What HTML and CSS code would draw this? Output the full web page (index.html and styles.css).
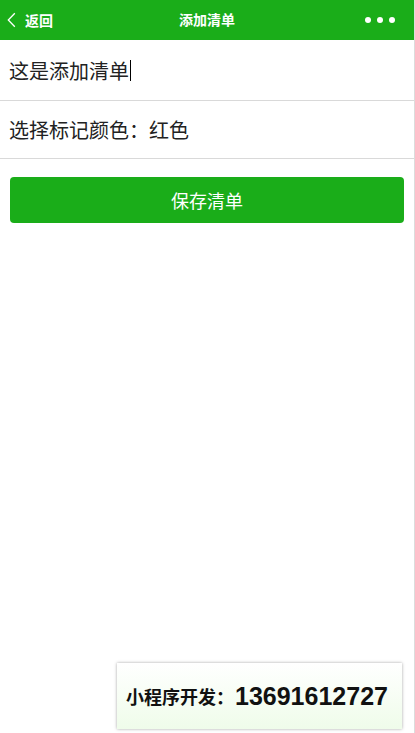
FILE: index.html
```html
<!DOCTYPE html>
<html lang="zh">
<head>
<meta charset="utf-8">
<link rel="stylesheet" href="styles.css">
</head>
<body>
<div class="page">
  <header class="navbar">
    <div class="nav-left">
      <svg class="back-icon" width="9" height="16" viewBox="0 0 9 16"><path d="M7.8 1.2 L1.3 8 L7.8 14.8" fill="none" stroke="#fff" stroke-width="1.3"/></svg>
      <span class="back-text">返回</span>
    </div>
    <div class="nav-title">添加清单</div>
    <div class="nav-more"><i></i><i></i><i></i></div>
  </header>
  <div class="row input-row"><span class="input-text">这是添加清单</span><span class="caret"></span></div>
  <div class="row picker-row">选择标记颜色：红色</div>
  <div class="btn-wrap"><button class="save-btn">保存清单</button></div>
  <div class="spacer"></div>
  <div class="promo"><span class="promo-cn">小程序开发：</span><span class="promo-num">13691612727</span></div>
</div>
</body>
</html>
```
FILE: styles.css
```css
html, body { margin: 0; padding: 0; background: #fff; }
body { font-family: "Liberation Sans", "Noto Sans CJK SC", sans-serif; }
.page {
  width: 414px;
  height: 733px;
  border-right: 1px solid #dcdcdc;
  display: flex;
  flex-direction: column;
  box-sizing: content-box;
  overflow: hidden;
}
.navbar {
  height: 40px;
  background: #1aad19;
  display: flex;
  align-items: center;
  position: relative;
  color: #fff;
  flex-shrink: 0;
}
.nav-left { display: flex; align-items: center; padding-left: 7px; }
.back-icon { display: block; }
.back-text { font-size: 14px; font-weight: bold; margin-left: 9px; }
.nav-title {
  position: absolute; left: 0; right: 0; top: 0; height: 40px; line-height: 40px;
  text-align: center; font-size: 14px; font-weight: bold; pointer-events: none;
}
.nav-more { margin-left: auto; margin-right: 19px; display: flex; gap: 6px; }
.nav-more i { width: 6px; height: 6px; border-radius: 50%; background: #fff; display: block; }
.row {
  border-bottom: 1px solid #d9d9d9;
  padding-left: 9px;
  font-size: 20px;
  color: #222;
  display: flex;
  align-items: center;
}
.input-row { height: 60px; }
.picker-row { height: 57px; }
.caret { width: 1px; height: 21px; background: #000; margin-left: 1px; }
.btn-wrap { padding: 18px 10px 0 10px; }
.save-btn {
  width: 100%; height: 46px; border: none; border-radius: 4px;
  background: #1aad19; color: #fff; font-size: 18px;
  font-family: "Liberation Sans", "Noto Sans CJK SC", sans-serif;
  display: block;
}
.spacer { flex: 1; }
.promo {
  align-self: flex-end;
  margin-right: 12px; margin-bottom: 4px;
  width: 285px; height: 66px;
  box-sizing: border-box;
  background: linear-gradient(#ffffff, #effcea);
  box-shadow: 0 0 3px rgba(0,0,0,0.35);
  display: flex; align-items: center;
  padding-left: 9px;
  font-weight: bold; color: #111;
}
.promo-cn { font-size: 18px; }
.promo-num { font-size: 25px; margin-left: 1px; }
```
